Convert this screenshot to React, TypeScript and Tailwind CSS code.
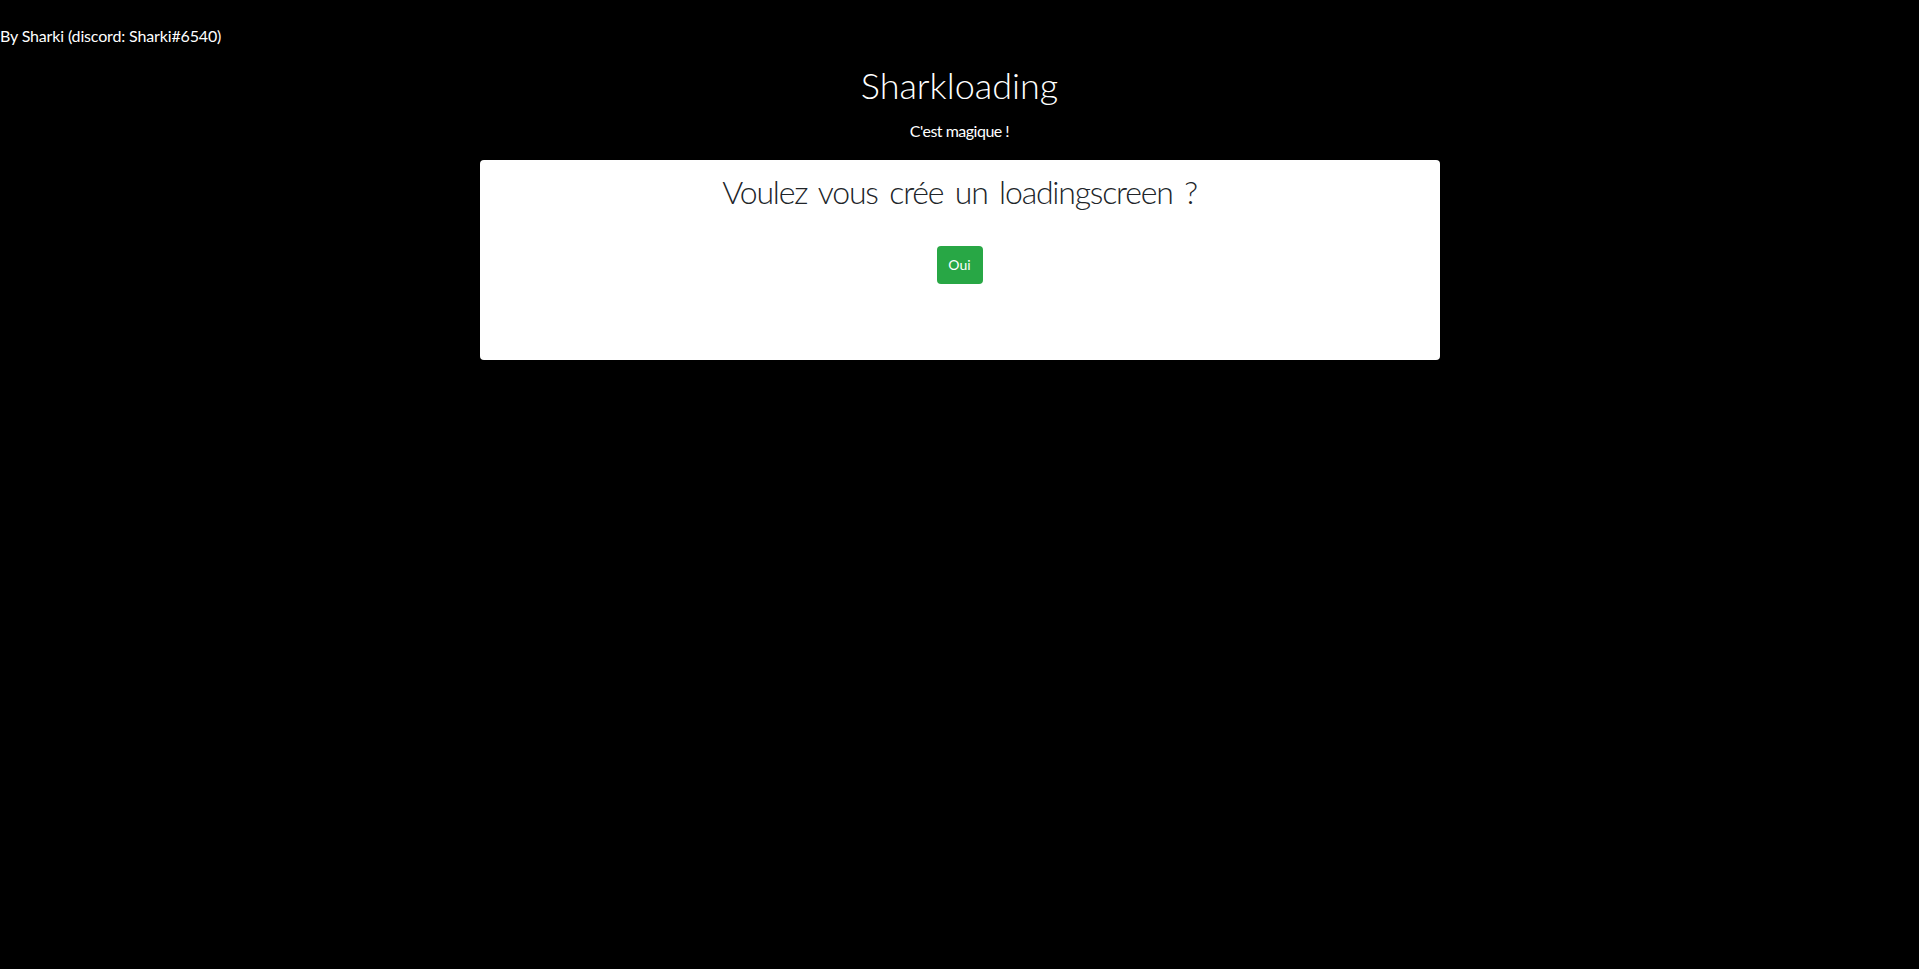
import React from 'react';

const hand = 'font-["Lato",sans-serif]';

const App: React.FC = () => {
  return (
    <div className={`min-h-[969px] bg-black text-white ${hand}`}>
      <p className="pt-6 h-12 text-[16px] leading-6 tracking-[-0.15px]">By Sharki (discord: Sharki#6540)</p>
      <h1 className="mt-[13px] h-12 text-center text-[36px] leading-[48px] font-light">Sharkloading</h1>
      <p className="mt-[10px] h-6 text-center text-[16px] leading-6 tracking-[-0.5px]">C'est magique !</p>
      <div className="mx-auto mt-[17px] h-[200px] w-[960px] rounded-[4px] bg-white pt-[13px] text-center text-[#212529]">
        <h2 className="h-[38px] text-[32px] leading-[38px] font-light tracking-[-1.2px] [word-spacing:4px]">Voulez vous crée un loadingscreen ?</h2>
        <button className="mt-[35px] h-[38px] w-[46px] rounded-[4px] bg-[#28a745] text-[14px] leading-6 text-white">Oui</button>
      </div>
    </div>
  );
};

export default App;
